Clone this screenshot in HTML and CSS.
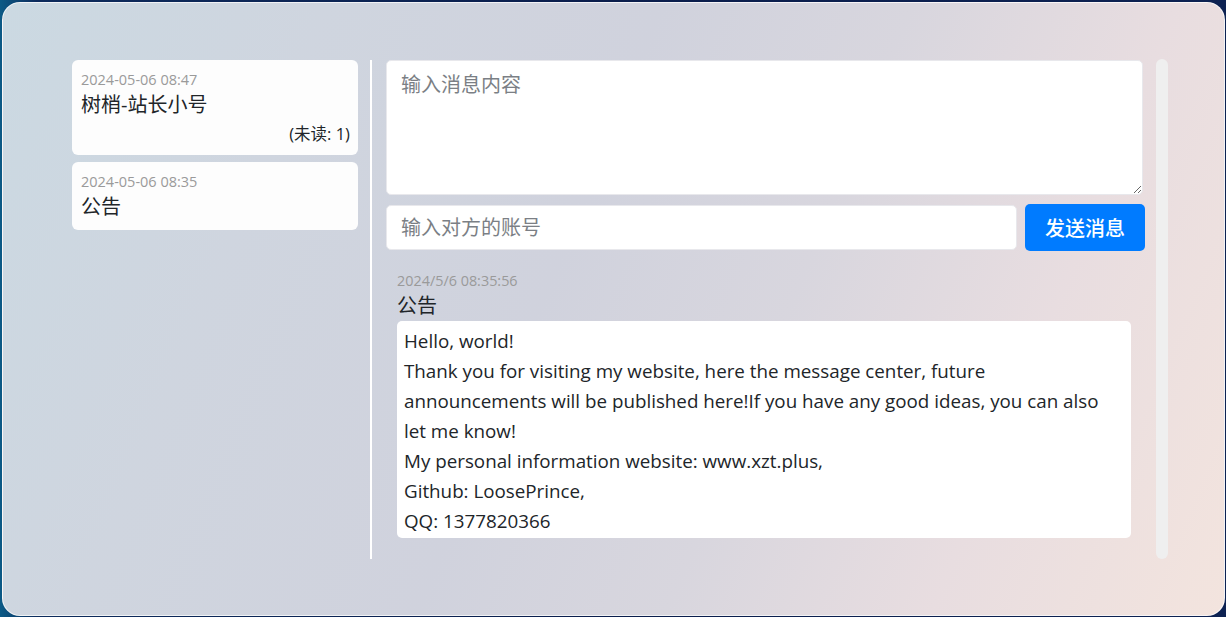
FILE: index.html
```html
<!DOCTYPE html>
<html lang="zh-CN">
<head>
<meta charset="utf-8">
<title>消息中心</title>
<link rel="stylesheet" href="styles.css">
</head>
<body>
<div class="panel">
  <aside class="contacts">
    <div class="card">
      <div class="card-time">2024-05-06 08:47</div>
      <div class="card-name">树梢-站长小号</div>
      <div class="card-unread">(未读: 1)</div>
    </div>
    <div class="card">
      <div class="card-time">2024-05-06 08:35</div>
      <div class="card-name">公告</div>
    </div>
  </aside>
  <div class="divider"></div>
  <main class="chat">
    <textarea class="msg-input" placeholder="输入消息内容"></textarea>
    <div class="send-row">
      <input class="acct-input" type="text" placeholder="输入对方的账号">
      <button class="send-btn">发送消息</button>
    </div>
    <div class="message">
      <div class="msg-time">2024/5/6 08:35:56</div>
      <div class="msg-from">公告</div>
      <div class="msg-body">Hello, world!<br>Thank you for visiting my website, here the message center, future announcements will be published here!If you have any good ideas, you can also let me know!<br>My personal information website: www.xzt.plus,<br>Github: LoosePrince,<br>QQ: 1377820366</div>
    </div>
  </main>
  <div class="scrollbar"></div>
</div>
</body>
</html>
```

FILE: styles.css
```css
* { box-sizing: border-box; }
html, body { margin: 0; height: 100%; }
body {
  background: linear-gradient(90deg, #0b5a86 0%, #0d2b5c 3%, #0a1d4c 50%, #0d2252 100%);
  font-family: "Open Sans", "Noto Sans CJK SC", sans-serif;
  color: #212529;
  overflow: hidden;
}
.panel {
  margin: 2px 1px 0 2px;
  height: 614px;
  border-radius: 18px;
  border: 1px solid rgba(255,255,255,0.7);
  background: linear-gradient(112deg, #cbd9e2 0%, #cfd5df 22%, #d0d2dd 45%, #d8d6de 62%, #e8dde0 80%, #f3e4de 100%);
  padding: 56px 0 0 69px;
  display: flex;
  align-items: flex-start;
}
.contacts {
  width: 286px;
  margin-top: 1px;
  display: flex;
  flex-direction: column;
  gap: 7px;
}
.card {
  background: #fdfdfd;
  border-radius: 6px;
  padding: 9px 8px 8px 9px;
}
.card-time {
  font-size: 14.5px;
  line-height: 21px;
  color: #9a9a9a;
}
.card-name {
  font-size: 20px;
  line-height: 30px;
  color: #212529;
}
.card-unread {
  font-size: 16.5px;
  line-height: 28px;
  margin-bottom: -1px;
  text-align: right;
  color: #212529;
}
.divider {
  width: 2px;
  height: 499px;
  margin-left: 12px;
  margin-top: 1px;
  background: #ffffff;
}
.chat {
  width: 757px;
  margin-left: 14px;
  margin-top: 1px;
  display: flex;
  flex-direction: column;
}
.msg-input {
  height: 135px;
  width: 100%;
  resize: vertical;
  border: 1px solid #e8e8ec;
  border-radius: 5px;
  background: #fff;
  padding: 10px 14px;
  font-family: inherit;
  font-size: 20px;
  line-height: 28px;
  outline: none;
  display: block;
}
.msg-input::placeholder, .acct-input::placeholder { color: #7b7f85; }
.send-row {
  display: flex;
  align-items: center;
  gap: 8px;
  margin-top: 9px;
}
.acct-input {
  flex: 0 0 631px;
  height: 45px;
  border: 1px solid #e8e8ec;
  border-radius: 5px;
  background: #fff;
  padding: 0 14px;
  font-family: inherit;
  font-size: 20px;
  outline: none;
}
.send-btn {
  flex: 0 0 120px;
  height: 47px;
  border: none;
  border-radius: 5px;
  background: #007bff;
  color: #fff;
  font-family: inherit;
  font-size: 20px;
  font-weight: 500;
}
.message {
  margin: 19px 12px 0 11px;
}
.msg-time {
  font-size: 14.4px;
  line-height: 22px;
  color: #9a9a9a;
}
.msg-from {
  font-size: 20px;
  line-height: 28px;
  color: #212529;
}
.msg-body {
  margin-top: 1px;
  background: #fff;
  border-radius: 5px;
  padding: 5px 14px 2px 7px;
  font-size: 18.8px;
  line-height: 30px;
  color: #212529;
}
.scrollbar {
  width: 12px;
  height: 500px;
  margin-left: 13px;
  border-radius: 6px;
  background: #efefef;
}
```
